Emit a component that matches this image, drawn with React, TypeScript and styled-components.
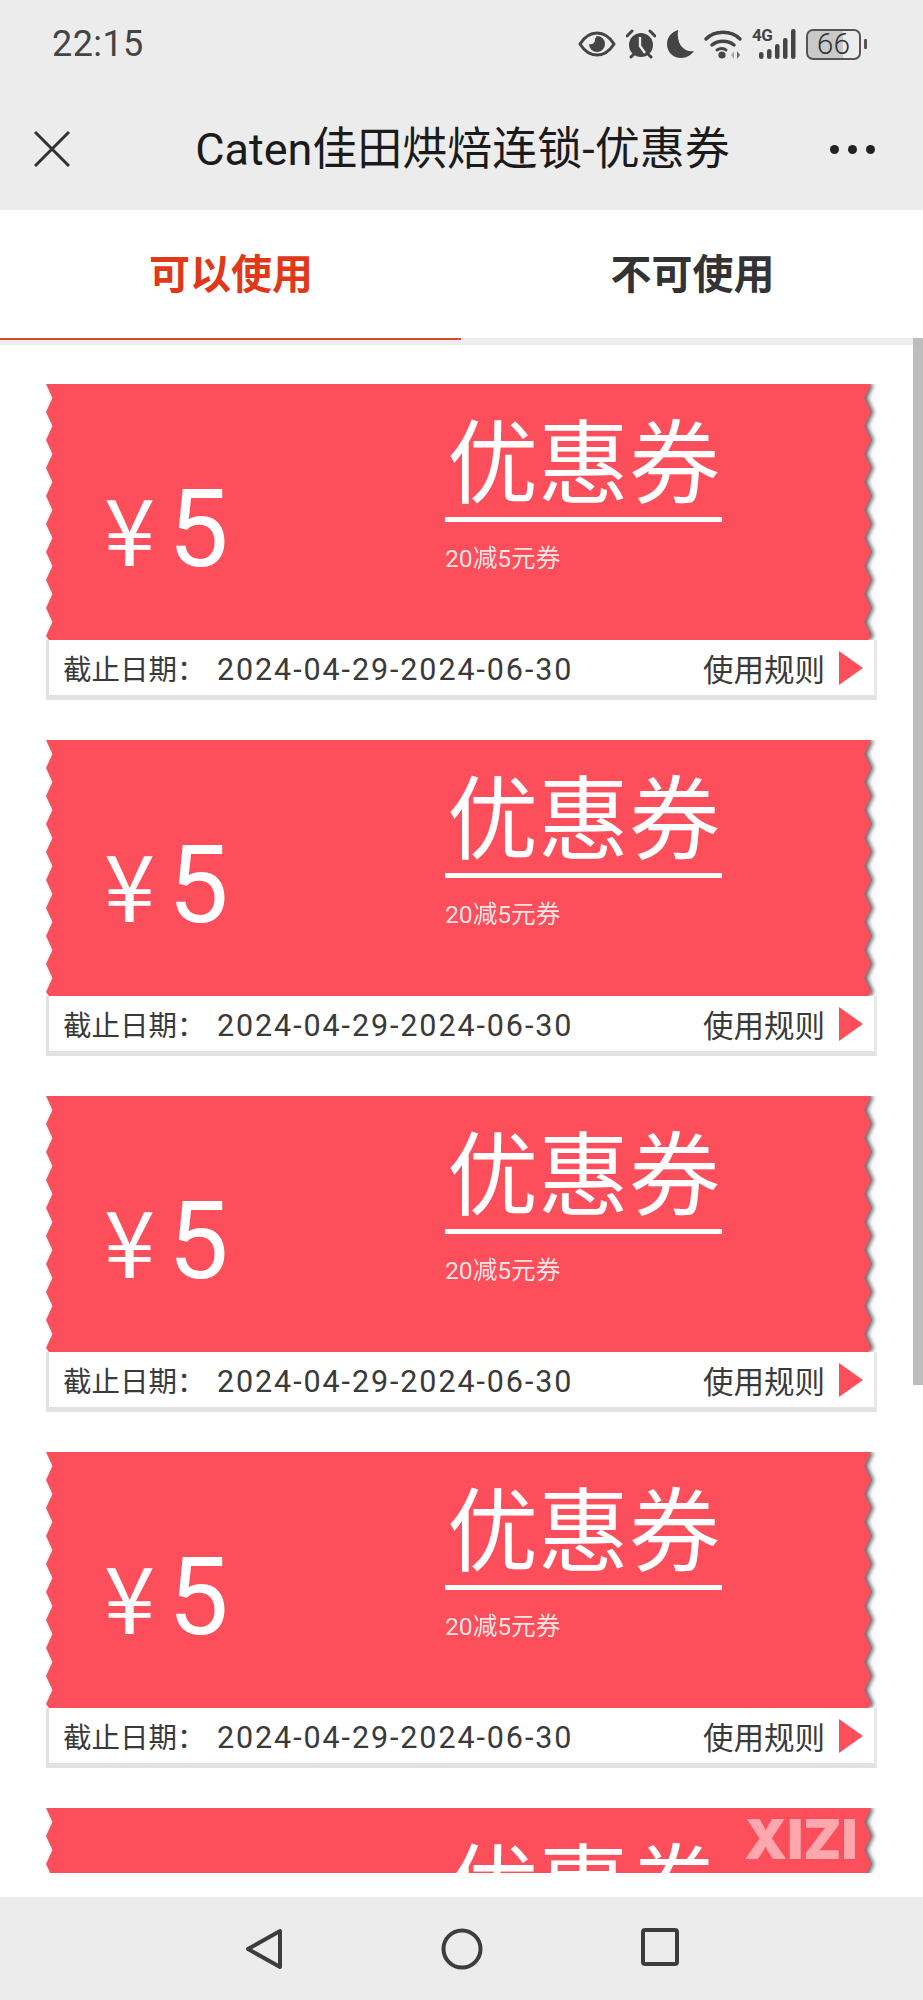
import styled, { createGlobalStyle } from 'styled-components';

const RED = '#fd4f5b';
const CJK = `Roboto, "Noto Sans CJK SC", sans-serif`;

const GlobalStyle = createGlobalStyle`
  html, body {
    margin: 0;
    padding: 0;
    background: #fff;
    font-family: ${CJK};
  }
`;

// zigzag outline of the ticket edges
const TOOTH = 28;
const DEPTH = 6.5;
const PANEL_W = 825;
const PANEL_H = 256;

function zigzag() {
  const right: string[] = [];
  const left: string[] = [];
  for (let y = 0; y <= PANEL_H; y += TOOTH / 2) {
    const odd = Math.round(y / (TOOTH / 2)) % 2 === 1;
    right.push(`${odd ? PANEL_W - DEPTH : PANEL_W}px ${y}px`);
    left.unshift(`${odd ? DEPTH : 0}px ${y}px`);
  }
  right.push(`${PANEL_W - 3}px ${PANEL_H}px`);
  left.unshift(`3px ${PANEL_H}px`);
  return `polygon(${[...right, ...left].join(',')})`;
}

const Page = styled.div`
  width: 923px;
  height: 2000px;
  display: flex;
  flex-direction: column;
  overflow: hidden;
  position: relative;
`;

const TopArea = styled.header`
  background: #ececec;
  height: 210px;
  flex: none;
`;

const StatusBar = styled.div`
  height: 88px;
  display: flex;
  align-items: center;
  justify-content: space-between;
  padding: 0 56px 0 52px;
`;

const Clock = styled.span`
  font-size: 36px;
  color: #444;
  letter-spacing: 0.4px;
`;

const StatusIcons = styled.div`
  display: flex;
  align-items: center;
  gap: 10px;
  color: #444;
`;

const NetworkBlock = styled.div`
  position: relative;
  width: 44px;
  height: 30px;
`;

const NetworkLabel = styled.span`
  position: absolute;
  left: 0;
  top: -3px;
  font-size: 17px;
  font-weight: 700;
  line-height: 18px;
  letter-spacing: -0.5px;
  color: #444;
`;

const Battery = styled.div`
  display: flex;
  align-items: center;
  gap: 3px;
`;

const BatteryBody = styled.div`
  width: 55px;
  height: 31px;
  box-sizing: border-box;
  border: 2px solid #555;
  border-radius: 7px;
  display: flex;
  align-items: center;
  justify-content: center;
  font-size: 30px;
  line-height: 26px;
  font-weight: 300;
  color: #333;
  background: linear-gradient(to right, #c9c9c9 68%, transparent 68%);
`;

const BatteryNub = styled.div`
  width: 3px;
  height: 10px;
  border-radius: 1px;
  background: #555;
`;

const TitleBar = styled.div`
  height: 122px;
  display: flex;
  align-items: center;
  justify-content: space-between;
  padding: 0 48px 0 34px;
`;

const Title = styled.h1`
  margin: 0 0 0 25px;
  font-size: 45px;
  font-weight: 400;
  color: #1b1b1b;
  line-height: 1;
`;

const Dots = styled.div`
  display: flex;
  gap: 9px;
`;

const Dot = styled.span`
  width: 9px;
  height: 9px;
  border-radius: 50%;
  background: #222;
`;

const Tabs = styled.nav`
  height: 128px;
  flex: none;
  display: grid;
  grid-template-columns: 461px 462px;
  background: #fff;
`;

const Tab = styled.div<{ $active?: boolean }>`
  display: flex;
  align-items: center;
  justify-content: center;
  font-size: 41px;
  font-weight: 700;
  padding: 0 0 7px 1px;
  color: ${(p) => (p.$active ? '#e0391a' : '#333')};
`;

const Band = styled.div`
  height: 7px;
  flex: none;
  background: #eeeeee;
  position: relative;
`;

const ActiveLine = styled.div`
  width: 461px;
  height: 2px;
  background: #d5492f;
`;

const Scroller = styled.main`
  height: 1528px;
  flex: none;
  overflow: hidden;
  padding: 39px 46px 0;
  box-sizing: border-box;
  display: flex;
  flex-direction: column;
  gap: 40px;
  background: #fff;
  position: relative;
`;

const ScrollThumb = styled.div`
  position: absolute;
  top: 338px;
  right: 0;
  width: 10px;
  height: 1047px;
  background: #bdbdbd;
`;

const Card = styled.article`
  width: 831px;
  flex: none;
  position: relative;
`;

const Ticket = styled.div`
  width: ${PANEL_W}px;
  filter: drop-shadow(3px 0 2px rgba(50, 50, 50, 0.75));
  clip-path: inset(0 -12px 0 0);
`;

const Panel = styled.div`
  height: ${PANEL_H}px;
  background: ${RED};
  clip-path: ${zigzag()};
  display: grid;
  grid-template-columns: 399px 277px;
  color: #fff;
`;

const Amount = styled.div`
  display: flex;
  align-items: baseline;
  gap: 13px;
  padding: 87px 0 0 58px;
`;

const Currency = styled.span`
  font-size: 92px;
  line-height: 110px;
  font-family: "Noto Sans CJK SC", sans-serif;
  font-weight: 400;
`;

const Value = styled.span`
  font-size: 108px;
  line-height: 110px;
  font-weight: 400;
`;

const Offer = styled.div`
  padding-top: 22px;
`;

const OfferTitle = styled.div`
  font-size: 91px;
  line-height: 100px;
  font-weight: 400;
  white-space: nowrap;
  text-align: center;
  font-family: "Noto Sans CJK SC", sans-serif;
  border-bottom: 5px solid #fff;
  padding-bottom: 11px;
`;

const OfferNote = styled.div`
  margin-top: 22px;
  font-size: 24.6px;
  line-height: 30px;
  color: rgba(255, 255, 255, 0.85);
`;

const Footer = styled.footer`
  height: 60px;
  box-sizing: border-box;
  border-left: 3px solid #e2e2e2;
  border-right: 3px solid #e8e8e8;
  border-bottom: 5px solid #e2e2e2;
  display: flex;
  align-items: center;
  justify-content: space-between;
  padding: 0 11px 0 14px;
  font-size: 30.5px;
  color: #3a3a3a;
`;

const Deadline = styled.span`
  display: flex;
  align-items: baseline;
`;

const DeadlineLabel = styled.span`
  font-size: 28.5px;
  width: 154px;
`;

const DeadlineDates = styled.span`
  letter-spacing: 1.9px;
`;

const Rules = styled.span`
  display: flex;
  align-items: center;
  gap: 14px;
`;

const Arrow = styled.span`
  width: 0;
  height: 0;
  border-left: 24px solid ${RED};
  border-top: 17px solid transparent;
  border-bottom: 17px solid transparent;
`;

const Watermark = styled.span`
  position: absolute;
  left: 698px;
  top: 5px;
  font-family: Inter, sans-serif;
  font-size: 55px;
  line-height: 52px;
  font-weight: 900;
  color: rgba(255, 255, 255, 0.5);
`;

const Spacer = styled.div`
  height: 24px;
  flex: none;
  background: #fff;
`;

const NavBar = styled.footer`
  height: 103px;
  flex: none;
  background: #ececec;
  display: flex;
  align-items: flex-start;
  padding: 31px 0 0 245px;
  gap: 158px;
  color: #3d3d3d;
`;

function EyeIcon() {
  return (
    <svg width="38" height="26" viewBox="0 0 38 26">
      <path d="M2 13C7 5 13 2 19 2s12 3 17 11c-5 8-11 11-17 11S7 21 2 13z" fill="none" stroke="currentColor" strokeWidth="3" />
      <path d="M19 5a8 8 0 1 1-8 8c3 1 6-1 6-4 0-2 1-3 2-4z" fill="currentColor" />
    </svg>
  );
}

function AlarmIcon() {
  return (
    <svg width="30" height="30" viewBox="0 0 30 30">
      <circle cx="15" cy="16" r="12" fill="currentColor" />
      <path d="M14 8v9l5 7" fill="none" stroke="#ececec" strokeWidth="2.4" />
      <path d="M1 7l5-5M29 7l-5-5M5 28l3-3M25 28l-3-3" stroke="currentColor" strokeWidth="3" strokeLinecap="round" />
    </svg>
  );
}

function MoonIcon() {
  return (
    <svg width="28" height="30" viewBox="0 0 28 30">
      <path d="M12 1C5 3 1 9 1 15c0 8 6 14 14 14 6 0 10-3 13-7-9 2-18-6-16-21z" fill="currentColor" />
    </svg>
  );
}

function WifiIcon() {
  return (
    <svg width="38" height="30" viewBox="0 0 38 30">
      <path d="M2 10c9-9 25-9 34 0M8 16c6-5 16-5 22 0" fill="none" stroke="currentColor" strokeWidth="3.4" strokeLinecap="round" />
      <path d="M13 21c3-2 7-2 9 0" fill="none" stroke="currentColor" strokeWidth="3" strokeLinecap="round" />
      <circle cx="18" cy="26" r="3.6" fill="currentColor" />
      <path d="M30 22l-3 4 3 4z" fill="#aaa" />
      <path d="M33 22v8l3-4z" fill="#666" />
    </svg>
  );
}

function SignalBars() {
  const bars = [
    [7, 23, 7],
    [15, 20, 10],
    [23, 15, 15],
    [31, 9, 21],
    [39, 0, 30],
  ];
  return (
    <svg width="44" height="30" viewBox="0 0 44 30" style={{ position: 'absolute', left: 0, top: 0 }}>
      {bars.map(([x, y, h]) => (
        <rect key={x} x={x} y={y} width="4.5" height={h} rx="2.2" fill="currentColor" />
      ))}
    </svg>
  );
}

function CloseIcon() {
  return (
    <svg width="36" height="36" viewBox="0 0 36 36">
      <path d="M1 1l34 34M35 1L1 35" stroke="#333" strokeWidth="3" />
    </svg>
  );
}

function BackIcon() {
  return (
    <svg width="38" height="42" viewBox="0 0 38 42">
      <path d="M3 21L35 3v36z" fill="none" stroke="currentColor" strokeWidth="4" strokeLinejoin="round" />
    </svg>
  );
}

function HomeIcon() {
  return (
    <svg width="42" height="42" viewBox="0 0 42 42">
      <circle cx="21" cy="21" r="18.5" fill="none" stroke="currentColor" strokeWidth="4" />
    </svg>
  );
}

function RecentIcon() {
  return (
    <svg width="38" height="38" viewBox="0 0 38 38">
      <rect x="2" y="2" width="34" height="34" rx="2" fill="none" stroke="currentColor" strokeWidth="4" />
    </svg>
  );
}

function Coupon({ children }: { children?: React.ReactNode }) {
  return (
    <Card>
      <Ticket>
        <Panel>
          <Amount>
            <Currency>¥</Currency>
            <Value>5</Value>
          </Amount>
          <Offer>
            <OfferTitle>优惠券</OfferTitle>
            <OfferNote>20减5元券</OfferNote>
          </Offer>
        </Panel>
      </Ticket>
      <Footer>
        <Deadline>
          <DeadlineLabel>截止日期：</DeadlineLabel>
          <DeadlineDates>2024-04-29-2024-06-30</DeadlineDates>
        </Deadline>
        <Rules>
          使用规则
          <Arrow />
        </Rules>
      </Footer>
      {children}
    </Card>
  );
}

function App() {
  return (
    <Page>
      <GlobalStyle />
      <TopArea>
        <StatusBar>
          <Clock>22:15</Clock>
          <StatusIcons>
            <EyeIcon />
            <AlarmIcon />
            <MoonIcon />
            <WifiIcon />
            <NetworkBlock>
              <SignalBars />
              <NetworkLabel>4G</NetworkLabel>
            </NetworkBlock>
            <Battery>
              <BatteryBody>66</BatteryBody>
              <BatteryNub />
            </Battery>
          </StatusIcons>
        </StatusBar>
        <TitleBar>
          <CloseIcon />
          <Title>Caten佳田烘焙连锁-优惠券</Title>
          <Dots>
            <Dot />
            <Dot />
            <Dot />
          </Dots>
        </TitleBar>
      </TopArea>
      <Tabs>
        <Tab $active>可以使用</Tab>
        <Tab>不可使用</Tab>
      </Tabs>
      <Band>
        <ActiveLine />
      </Band>
      <Scroller>
        <Coupon />
        <Coupon />
        <Coupon />
        <Coupon />
        <Coupon>
          <Watermark>XIZI</Watermark>
        </Coupon>
      </Scroller>
      <ScrollThumb />
      <Spacer />
      <NavBar>
        <BackIcon />
        <HomeIcon />
        <RecentIcon />
      </NavBar>
    </Page>
  );
}

export default App;
